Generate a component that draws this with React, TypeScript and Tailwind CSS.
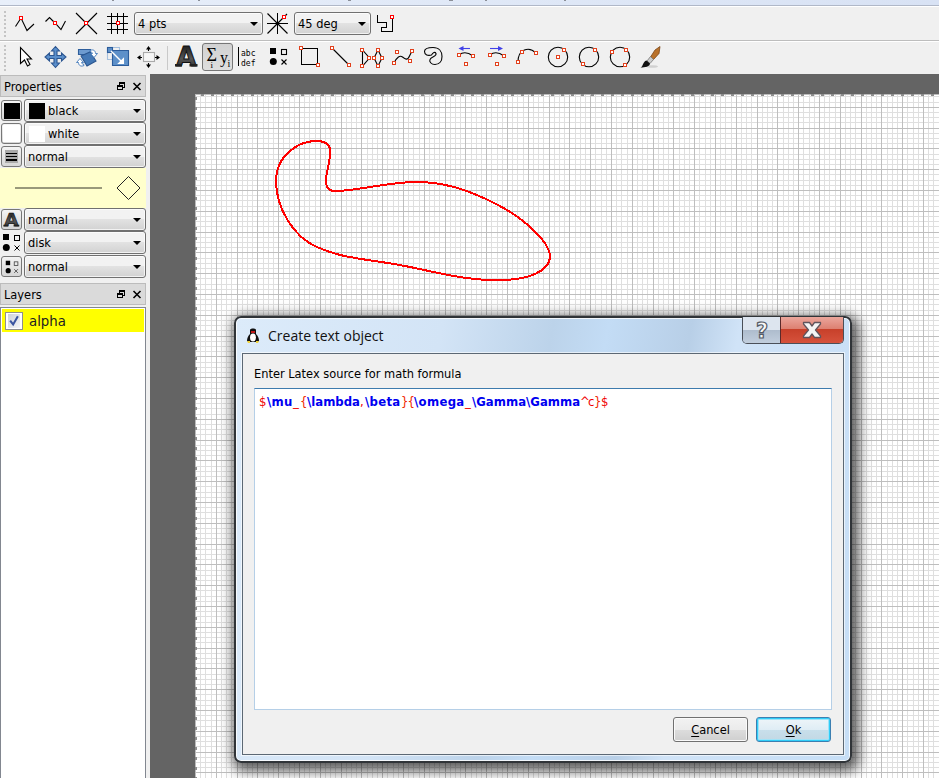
import type { ReactNode } from "react";
import clsx from "clsx";

type Point = [number, number];

function Nodes({ at, color = "#e2401c" }: { at: Point[]; color?: string }) {
  return (
    <g stroke="none" shapeRendering="crispEdges">
      {at.map(([x, y]) => (
        <g key={`${x}-${y}`}>
          <rect x={x - 2} y={y - 2} width="4" height="4" fill={color} />
          <rect x={x - 1} y={y - 1} width="2" height="2" fill="#fff" />
        </g>
      ))}
    </g>
  );
}

function Tool({ children, pressed }: { children: ReactNode; pressed?: boolean }) {
  return (
    <button
      type="button"
      className={clsx(
        "h-[31px] w-[31px] shrink-0",
        pressed &&
          "relative before:absolute before:inset-x-0 before:top-px before:bottom-[2px] before:rounded-[3px] before:border before:border-[#777] before:bg-linear-to-b before:from-[#d2d2d2] before:to-[#dedede]",
      )}
    >
      <svg
        className="relative block"
        width="31"
        height="31"
        viewBox="0 0 31 31"
        fill="none"
        stroke="#000"
        strokeWidth="1.1"
      >
        {children}
      </svg>
    </button>
  );
}

function Grip() {
  return <div className="ml-1 h-[26px] w-[2px] shrink-0 bg-[repeating-linear-gradient(to_bottom,#c4c4c4_0_2px,#f0f0f0_2px_4px)]" />;
}

function Arrow() {
  return <span className="h-0 w-0 shrink-0 border-x-4 border-t-4 border-x-transparent border-t-black" />;
}

function Combo({ label, swatch, className }: { label: string; swatch?: string; className: string }) {
  return (
    <button
      type="button"
      className={clsx(
        "flex h-[23px] shrink-0 items-center rounded-[3px] border border-[#707070] bg-linear-to-b from-[#f2f2f2] from-50% via-[#e2e2e2] via-50% to-[#d2d2d2] pr-[4px] pl-[3px] text-left shadow-[inset_0_0_0_1px_rgba(255,255,255,0.7)]",
        className,
      )}
    >
      {swatch && <span className={clsx("mr-[3px] ml-px h-4 w-4", swatch)} />}
      <span className="flex-1">{label}</span>
      <Arrow />
    </button>
  );
}

function Marks() {
  return (
    <>
      <rect x="6" y="6" width="6" height="6" fill="#000" stroke="none" />
      <rect x="17.5" y="7.5" width="5" height="5" />
      <circle cx="9.3" cy="19.5" r="3.5" fill="#000" stroke="none" />
      <path d="M17.5 17.5l5 5M22.5 17.5l-5 5" />
    </>
  );
}

function LetterA() {
  return (
    <>
      <defs>
        <linearGradient id="letter" x1="0" y1="0" x2="0" y2="1">
          <stop offset="0" stopColor="#111" />
          <stop offset="0.55" stopColor="#555" />
          <stop offset="1" stopColor="#222" />
        </linearGradient>
      </defs>
      <text
        x="15.2"
        y="24"
        textAnchor="middle"
        fontFamily="DejaVu Sans"
        fontWeight="bold"
        fontSize="26"
        fill="url(#letter)"
        stroke="#111"
        strokeWidth="1"
      >
        A
      </text>
      <path d="M4 22h7v2.500H4zM18.500 22h8v2.500h-8z" fill="#222" stroke="none" />
    </>
  );
}

function SnapBar() {
  return (
    <div className="flex h-[34px] items-center border-t border-white bg-[#f0f0f0]">
      <Grip />
      <div className="ml-[3px] flex">
        <Tool>
          <path d="M6.5 18.5L12 10l6 12.5 7-6.5" />
          <Nodes at={[[12, 10]]} color="#f00" />
        </Tool>
        <Tool>
          <path d="M5.5 13.5l4-4 6 6 5.5 6 4.5-8.5" />
          <Nodes at={[[15, 15]]} color="#f00" />
        </Tool>
        <Tool>
          <path d="M5 5l21 21M26 5L5 26" />
          <Nodes at={[[15, 15]]} color="#f00" />
        </Tool>
        <Tool>
          <path shapeRendering="crispEdges" d="M5 8.5h21M5 15.5h21M5 21.5h21M9.5 5v21M15.5 5v21M21.5 5v21" />
          <Nodes at={[[16, 15]]} color="#f00" />
        </Tool>
      </div>
      <Combo label="4 pts" className="ml-px w-[129px]" />
      <div className="-mx-px flex">
        <Tool>
          <path d="M15.5 5v21M5 15.5h21" shapeRendering="crispEdges" />
          <path d="M5.5 5.5l20 20M25 6L5.5 25.5" />
          <Nodes at={[[22, 9]]} color="#f00" />
        </Tool>
      </div>
      <Combo label="45 deg" className="ml-[2px] w-[77px]" />
      <Tool>
        <path shapeRendering="crispEdges" d="M6.5 7v7.500h9v5h-5v4h11V10" />
        <Nodes at={[[21, 9]]} color="#f00" />
      </Tool>
    </div>
  );
}

function ModeBar() {
  return (
    <div className="flex h-[34px] items-center border-t border-[#bdbdbd] bg-[#f0f0f0] shadow-[inset_0_1px_0_#fff]">
      <Grip />
      <div className="ml-[3px] flex">
        <Tool>
          <path fill="#fff" d="M11.5 5.500v16l4-3.500 3 6 2.500-1.500-3-5.500h4.500z" />
        </Tool>
        <Tool>
          <path
            d="M15.500 4.500l4 4.500h-2.500v4.500h4.500V11l4.500 4-4.500 4v-2.500H17V21h2.500l-4 4.500-4-4.500H14v-4.500H9.500V19L5 15l4.500-4v2.500H14V9h-2.500z"
            fill="#5b8fcb"
            stroke="#2c5691"
          />
        </Tool>
        <Tool>
          <path d="M7.500 7.500h12v5h-12z" fill="#6d9bd0" stroke="#2e5e9c" />
          <path d="M10 14l9-4 6 9-9 5z" fill="#4378b6" stroke="#2a5690" />
          <path d="M19 8.500c3-1.500 5.500 0 5.500 3h2l-3.500 4-3.500-4h2c0-1-.8-1.500-2-1.500z" fill="#fff" stroke="#4178ba" strokeWidth="0.900" />
          <path d="M13 23.500c-3 1.500-5.500 0-5.500-3h-2l3.500-4 3.500 4h-2c0 1 .8 1.500 2 1.500z" fill="#fff" stroke="#4178ba" strokeWidth="0.900" />
        </Tool>
        <Tool>
          <rect x="5.5" y="5.500" width="12" height="12" stroke="#5b8fcb" strokeDasharray="1 1" />
          <path d="M10.500 8.500h16v15h-16z" fill="#5d90c9" stroke="#2c5c9b" />
          <rect x="5.5" y="5.500" width="5" height="5" fill="#5d90c9" stroke="#2c5c9b" />
          <path d="M9 9l10 10" stroke="#fff" strokeWidth="1.400" />
          <path d="M21.500 16.500v5h-5z" fill="#fff" stroke="#fff" />
        </Tool>
        <Tool>
          <rect x="10.5" y="10.500" width="11" height="9" fill="#f6f6f6" stroke="#aaa" />
          <path d="M15.500 9V6M15.500 21v3M9 15.500H5.500M22 15.500h4" />
          <path
            d="M15.500 4l2.500 3.500h-5zM15.500 26l2.500-3.500h-5zM4 15.500L7.500 13v5zM27 15.500L23.500 13v5z"
            fill="#000"
            stroke="none"
          />
        </Tool>
      </div>
      <div className="mx-[3px] h-6 w-px bg-[#c9c9c9]" />
      <div className="flex">
        <Tool>
          <LetterA />
        </Tool>
        <Tool pressed>
          <g fill="#000" stroke="none" fontFamily="Liberation Serif">
            <text x="4.500" y="18.500" fontSize="18">Σ</text>
            <text x="8.500" y="26" fontSize="9">i</text>
            <text x="18" y="20.500" fontSize="16">y</text>
            <text x="25.500" y="25" fontSize="10">i</text>
          </g>
        </Tool>
        <Tool>
          <path d="M5.5 5v19" shapeRendering="crispEdges" />
          <g fill="#000" stroke="none" fontFamily="DejaVu Sans Mono" fontSize="8">
            <text x="8" y="13.500">abc</text>
            <text x="8" y="23.500">def</text>
          </g>
        </Tool>
        <Tool>
          <Marks />
        </Tool>
        <Tool>
          <path d="M6.5 6.500h16v16h-16z" shapeRendering="crispEdges" />
          <Nodes at={[[6, 6], [23, 23]]} />
        </Tool>
        <Tool>
          <path d="M6 6l17 17" />
          <Nodes at={[[6, 6], [23, 23]]} />
        </Tool>
        <Tool>
          <path d="M5.500 8v16l7-8zM17 16l4-8 4 8-4 8z" />
          <Nodes at={[[5, 8], [5, 24], [12, 16], [17, 16], [21, 8], [21, 24], [25, 16]]} />
        </Tool>
        <Tool>
          <path d="M6 21c3-6 6-8 8.500-6s5 4 7-1L24 9" />
          <Nodes at={[[6, 21], [9, 10], [22, 19], [24, 9]]} />
        </Tool>
        <Tool>
          <path d="M12.500 13C9 14 5.500 13 5.500 9.500 5.500 6 10 5.500 14 5.500c6 0 9 4 9 9 0 4-2 8-7 8-4 0-6-3-5-5 1-3 7-3 6-6-1-2-3-1-4.500 1.500z" />
        </Tool>
        <Tool>
          <path d="M9 13q6-5 14 1" />
          <path d="M11 6.500h9" stroke="#4040e8" />
          <path d="M8.500 6.500l5-2.500v5z" fill="#4040e8" stroke="none" />
          <Nodes at={[[9, 13], [23, 14], [16, 22]]} />
        </Tool>
        <Tool>
          <path d="M9 13q6-5 14 1" />
          <path d="M9 6.500h9" stroke="#4040e8" />
          <path d="M22 6.500L17 4v5z" fill="#4040e8" stroke="none" />
          <Nodes at={[[9, 13], [23, 14], [16, 22]]} />
        </Tool>
        <Tool>
          <path d="M6 20C6 7 17 4 24 11" />
          <Nodes at={[[6, 20], [10, 10], [24, 11]]} />
        </Tool>
        <Tool>
          <circle cx="15" cy="15" r="9.700" />
          <Nodes at={[[15, 15], [21, 8]]} />
        </Tool>
        <Tool>
          <circle cx="15" cy="15" r="9.700" />
          <Nodes at={[[21, 8], [9, 22]]} />
        </Tool>
        <Tool>
          <circle cx="15" cy="15" r="9.700" />
          <Nodes at={[[7, 10], [21, 8], [20, 23]]} />
        </Tool>
        <Tool>
          <ellipse cx="16" cy="24.500" rx="6" ry="1.300" fill="#d0d0d0" stroke="none" />
          <path d="M24 4.500l-1 7-5.500 6-3-2.500 4.500-7z" fill="#b9722c" stroke="#7c4616" strokeWidth="0.800" />
          <path d="M14.500 14.500l3 3-3.500 4-3-2.500z" fill="#ccc" stroke="#777" strokeWidth="0.800" />
          <path d="M10.500 18.500l3.500 3c0 3-5 4-9.500 4 3-1 2-6 6-7z" fill="#111" stroke="none" />
        </Tool>
      </div>
    </div>
  );
}

function DockTitle({ title }: { title: string }) {
  return (
    <div className="flex h-[22px] w-[146px] shrink-0 items-center border border-[#bcbcbc] bg-[#dadada] pr-[3px] pl-[3px]">
      <span className="flex-1 pt-px">{title}</span>
      <svg width="26" height="11" viewBox="0 0 26 11" fill="none" stroke="#000" className="shrink-0">
        <path d="M3.500 4V1.500h5v5H6.500M3 2.500h6M1.500 4.500h5v4h-5zM1 5.500h6" shapeRendering="crispEdges" />
        <path d="M17.500 2l7 7M24.500 2l-7 7" strokeWidth="1.600" />
      </svg>
    </div>
  );
}

function SideButton({ children, flat }: { children: ReactNode; flat?: boolean }) {
  return (
    <button
      type="button"
      className={clsx(
        "flex h-[21px] w-[21px] shrink-0 items-center justify-center rounded-[3px]",
        !flat && "border border-[#777] bg-linear-to-b from-[#f4f4f4] to-[#d6d6d6]",
      )}
    >
      {children}
    </button>
  );
}

function PropertyRow({ icon, label, swatch, flat }: { icon: ReactNode; label: string; swatch?: string; flat?: boolean }) {
  return (
    <div className="flex h-[23px] items-center gap-[2px] pl-px">
      <SideButton flat={flat}>{icon}</SideButton>
      <Combo label={label} swatch={swatch} className="w-[122px]" />
    </div>
  );
}

function Sidebar() {
  return (
    <div className="flex w-[150px] shrink-0 flex-col bg-[#f0f0f0] pt-px">
      <DockTitle title="Properties" />
      <div className="mt-[2px] flex flex-col">
        <PropertyRow icon={<span className="h-4 w-4 bg-black" />} label="black" swatch="bg-black" />
        <PropertyRow icon={<span className="h-[17px] w-[17px] bg-white" />} label="white" swatch="bg-white" />
        <PropertyRow
          icon={
            <svg width="13" height="13" viewBox="0 0 13 13" shapeRendering="crispEdges">
              <path d="M0 0h13v13H0z" fill="#aaa" />
              <path d="M1 3.500h11M1 6.500h11" stroke="#000" />
              <path d="M1 10h11" stroke="#000" strokeWidth="2" />
            </svg>
          }
          label="normal"
        />
      </div>
      <div className="flex h-10 w-[146px] items-center bg-[#ffffcc]">
        <svg width="146" height="40" viewBox="0 0 146 40" fill="none">
          <path d="M14.500 20H102" stroke="#99997a" strokeWidth="2" shapeRendering="crispEdges" />
          <path d="M128.500 8.500L140 20l-11.500 11.500L117 20z" stroke="#222" />
        </svg>
      </div>
      <div className="flex flex-col">
        <PropertyRow
          icon={
            <svg width="19" height="19" viewBox="2 1 27 27" className="overflow-visible">
              <LetterA />
            </svg>
          }
          label="normal"
        />
        <PropertyRow
          flat
          icon={
            <svg width="21" height="21" viewBox="4 4 21 21" fill="none" stroke="#000">
              <Marks />
            </svg>
          }
          label="disk"
        />
        <div className="mt-px">
          <PropertyRow
            icon={
              <svg width="14" height="14" viewBox="5 5 19 19" fill="none" stroke="#333">
                <Marks />
              </svg>
            }
            label="normal"
          />
        </div>
      </div>
      <div className="mt-[5px]">
        <DockTitle title="Layers" />
      </div>
      <div className="mt-[2px] w-[146px] flex-1 border border-b-0 border-[#828790] bg-white p-px">
        <div className="flex h-[23px] items-center bg-[#ffff00] pl-[3px] text-[14.8px] text-[#222]">
          <span className="mr-[6px] flex h-[18px] w-[18px] items-center justify-center border border-[#8e8f8f] bg-white p-[2px]">
            <svg width="14" height="14" viewBox="0 0 14 14" className="bg-linear-to-br from-[#cdd2da] to-[#f4f5f7]">
              <path d="M2.500 6.500L6 11 11.500 1.500" fill="none" stroke="#3a55a0" strokeWidth="2.400" />
            </svg>
          </span>
          <span className="pt-px">alpha</span>
        </div>
      </div>
    </div>
  );
}

// Page origin inside the canvas and the spacing of the heavy grid lines.
const ORIGIN: Point = [66.2, 33.2];
const MAJOR = 20.8;

function gridPath(step: number, skip: number) {
  let d = "";
  for (let i = -4; i < 160; i++) {
    if (skip && i % skip === 0) continue;
    const x = Math.floor(ORIGIN[0] + i * step) + 0.5;
    const y = Math.floor(ORIGIN[1] + i * step) + 0.5;
    if (x > 46 && x < 789) d += `M${x} 20V704`;
    if (y > 20 && y < 704) d += `M46 ${y}H789`;
  }
  return d;
}

function Canvas() {
  return (
    <svg className="block flex-1 bg-[#646464]" width="789" height="704" viewBox="0 0 789 704" fill="none">
      <path d="M45 20h744v684H45z" fill="#fff" />
      <g shapeRendering="crispEdges">
        <path d={gridPath(MAJOR / 4, 4)} stroke="#dfdfdf" />
        <path d={gridPath(MAJOR, 0)} stroke="#bebebe" />
        <path d="M45.500 20V704M45 20.500H789" stroke="#bbb" />
        <path d="M46 23V704" stroke="#8c8c8c" strokeWidth="2" strokeDasharray="3 7" />
        <path d="M51 20.500H789" stroke="#8c8c8c" strokeWidth="2" strokeDasharray="3 7" />
      </g>
      <path
        transform="translate(-150 -74)"
        d="M316 141C298 141 276 156 276 181C276 207 293 237 317 247C343 259 369 259 405 266C440 273 468 281 500 280C529 280 549 271 550 257C550 242 524 218 496 204C467 189 443 182 416 182C388 182 357 191 335 191C328 191 326 187 326 181C326 171 331 161 330 149C329 143 324 141 316 141Z"
        stroke="#f00"
        strokeWidth="2"
        shapeRendering="crispEdges"
      />
    </svg>
  );
}

// Editor tokens: text, kind, advance width.
const source: [string, "cmd" | "sym" | "brace", string][] = [
  ["$", "sym", "w-[8px]"],
  ["\\mu", "cmd", "w-[26px] tracking-[0.3px]"],
  ["_", "sym", "w-[7px]"],
  ["{", "brace", "w-[7px]"],
  ["\\lambda", "cmd", "w-[53px]"],
  [",", "sym", "w-[5px]"],
  ["\\beta", "cmd", "w-[36px] tracking-[0.3px]"],
  ["}{", "brace", "w-[13px] tracking-[-0.9px]"],
  ["\\omega", "cmd", "w-[51px] tracking-[0.3px]"],
  ["_", "sym", "w-[7px]"],
  ["\\Gamma\\Gamma", "cmd", "w-[108px]"],
  ["^", "sym", "w-[8px]"],
  ["c", "sym", "w-[6px]"],
  ["}", "brace", "w-[7px]"],
  ["$", "sym", "w-[8px]"],
];

const tokenClass = {
  cmd: "font-bold text-[#0000f0]",
  sym: "text-[#f00000]",
  brace: "text-[#f02800]",
};

function Penguin() {
  return (
    <svg width="14" height="16" viewBox="0 0 14 16">
      <path d="M4 2c0-2 6-2 6 0v4c2 2 3 4 3 7l-2 1H3l-2-1c0-3 1-5 3-7z" fill="#111" />
      <ellipse cx="7" cy="9.500" rx="3" ry="4" fill="#fff" />
      <path d="M5 3h4v2H5z" fill="#c01818" />
      <path d="M1 13h3v2H2zM10 13h3l-1 2h-2z" fill="#f1d43a" />
    </svg>
  );
}

function TextDialog() {
  return (
    <div className="absolute top-[316px] left-[234px] flex h-[447px] w-[618px] flex-col rounded-[7px] border-2 border-[#303438] bg-[linear-gradient(100deg,#dcebfa_0%,#d3e4f6_30%,#bcd3ea_46%,#c3dcf5_54%,#b8cfe7_66%,#d0e3f7_73%,#c6def6_100%)] px-[6px] pb-[6px] shadow-[3px_4px_13px_4px_rgba(0,0,0,0.65),inset_0_0_0_1px_rgba(255,255,255,0.8)]">
      <div className="flex h-[35px] shrink-0 items-start">
        <div className="flex flex-1 items-center gap-2 pt-[7px] pl-[4px]">
          <Penguin />
          <span className="font-['Open_Sans',sans-serif] text-[14px] leading-[22px] text-[#111]">
            Create text object
          </span>
        </div>
        <div className="-mt-px flex h-[27px] w-[102px] overflow-hidden rounded-b-[5px] border border-t-0 border-[#4a4f58]">
          <button
            type="button"
            className="flex w-[38px] items-center justify-center border-r border-[#5b2a2a] bg-linear-to-b from-[#dde5ef] from-50% via-[#aebccd] via-50% to-[#c1cedd]"
          >
            <svg width="20" height="24" viewBox="0 0 20 24">
              <text
                x="10"
                y="19.500"
                textAnchor="middle"
                fontFamily="DejaVu Sans"
                fontWeight="bold"
                fontSize="21"
                fill="#f7f7f7"
                stroke="#555a66"
                strokeWidth="1.200"
              >
                ?
              </text>
            </svg>
          </button>
          <button
            type="button"
            className="flex flex-1 items-center justify-center bg-[linear-gradient(#eba69c,#dd8172_45%,#c7402a_46%,#d6523c_100%)]"
          >
            <svg width="20" height="18" viewBox="0 0 20 18" fill="none">
              <path
                d="M1.500 1.500h6L10 5l2.500-3.500h6v1.500L13.500 9l5 6v1.500h-6L10 13l-2.500 3.500h-6V15l5-6-5-6z"
                fill="#f4f4f4"
                stroke="#60545c"
                strokeWidth="1.300"
                strokeLinejoin="round"
              />
            </svg>
          </button>
        </div>
      </div>
      <div className="flex flex-1 flex-col border border-[#5c6874] bg-[#f0f0f0] px-[11px] shadow-[0_0_0_1px_rgba(255,255,255,0.6)]">
        <p className="mt-[9px] h-[25px] leading-[22px]">Enter Latex source for math formula</p>
        <div className="h-[322px] border border-[#b5cfe7] border-t-[#3d7bad] bg-white pt-[3px] pl-[4px] text-[13px] leading-[20px]">
          <div className="flex whitespace-nowrap">
            {source.map(([text, kind, width], i) => (
              <span key={i} className={clsx("shrink-0", tokenClass[kind], width)}>
                {text}
              </span>
            ))}
          </div>
        </div>
        <div className="mt-[7px] mr-px flex justify-end gap-2">
          <button
            type="button"
            className="h-[25px] w-[75px] rounded-[3px] border border-[#707070] bg-[linear-gradient(#f2f2f2,#ebebeb_50%,#dddddd_50%,#cfcfcf)] shadow-[inset_0_0_0_1px_#fafafa]"
          >
            <span className="underline underline-offset-2">C</span>ancel
          </button>
          <button
            type="button"
            className="h-[25px] w-[75px] rounded-[3px] border border-[#3c7fb1] bg-[linear-gradient(#eef5f9,#dfedf5_50%,#c8dfeb_50%,#c2d8e4)] shadow-[inset_0_0_0_1px_#30cdf8,inset_0_0_0_2px_#9fe3f8]"
          >
            <span className="underline underline-offset-2">O</span>k
          </button>
        </div>
      </div>
    </div>
  );
}

export default function App() {
  return (
    <div className="relative flex h-[778px] w-[939px] flex-col overflow-hidden bg-[#f0f0f0] font-['DejaVu_Sans_Condensed','DejaVu_Sans',sans-serif] text-[12.7px] text-black">
      <div className="h-[6px] shrink-0 border-b border-[#b0b8c8] bg-linear-to-r from-[#e8effa] to-[#d8e2f4]">
        <svg className="block" width="939" height="2" viewBox="0 0 939 2">
          <path d="M112 0h2v1h-2zM198 0h2v1h-2zM348 0h3v1h-3zM449 0h4v1h-4zM485 0h2v1h-2zM564 0h2v1h-2z" fill="#8b8f98" />
        </svg>
      </div>
      <SnapBar />
      <ModeBar />
      <div className="flex flex-1">
        <Sidebar />
        <Canvas />
      </div>
      <TextDialog />
    </div>
  );
}
